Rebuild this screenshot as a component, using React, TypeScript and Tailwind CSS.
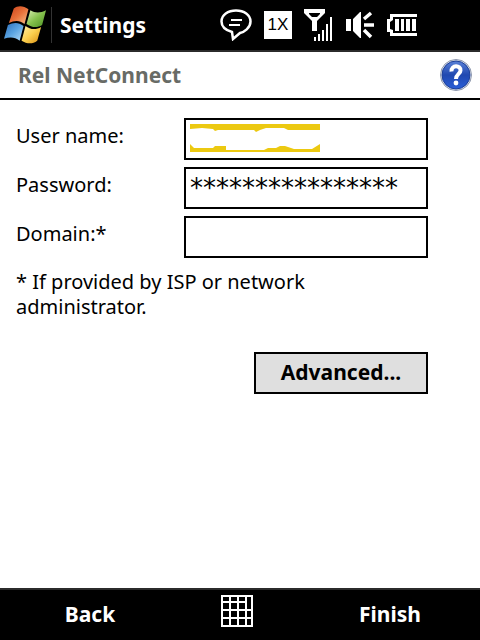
function WindowsLogo() {
  return (
    <svg width="43" height="40" viewBox="0 0 44 40" aria-hidden="true">
      <defs>
        <linearGradient id="red" x1="0" y1="0" x2="1" y2="1">
          <stop offset="0" stopColor="#c9401a" />
          <stop offset="0.5" stopColor="#e8713a" />
          <stop offset="1" stopColor="#f9c08a" />
        </linearGradient>
        <linearGradient id="green" x1="0" y1="0" x2="1" y2="1">
          <stop offset="0" stopColor="#d9efb0" />
          <stop offset="0.5" stopColor="#84c04c" />
          <stop offset="1" stopColor="#4a8f22" />
        </linearGradient>
        <linearGradient id="blue" x1="0" y1="0" x2="1" y2="1">
          <stop offset="0" stopColor="#2b6cb8" />
          <stop offset="0.5" stopColor="#5aa3e0" />
          <stop offset="1" stopColor="#b5dcf7" />
        </linearGradient>
        <linearGradient id="yellow" x1="0" y1="0" x2="1" y2="1">
          <stop offset="0" stopColor="#fff0a8" />
          <stop offset="0.5" stopColor="#fbcf4e" />
          <stop offset="1" stopColor="#d98d12" />
        </linearGradient>
      </defs>
      <path d="M10 3C14 0 20 0 25 4L21 19C16 15 11 15 5 18Z" fill="url(#red)" />
      <path d="M27 5C32 8 37 8 43 5L39 20C34 23 29 23 23 19Z" fill="url(#green)" />
      <path d="M4 20C10 17 15 17 20 21L16 36C11 32 6 32 0 34Z" fill="url(#blue)" />
      <path d="M22 21C27 25 33 25 38 22L34 36C29 40 23 39 18 36Z" fill="url(#yellow)" />
    </svg>
  )
}

function MessageIcon() {
  return (
    <svg width="32" height="32" viewBox="0 0 32 32" fill="none" stroke="white" strokeWidth="2.5">
      <path d="M12 23C5 21 1.5 17 1.5 12.5C1.5 6 8 1.5 16 1.5S30.5 6 30.5 12.5S24 23 20 24L13 30Z" />
      <path d="M11 11H22M9 16H20" strokeWidth="2" />
    </svg>
  )
}

function SignalIcon() {
  return (
    <svg width="30" height="32" viewBox="0 0 30 32" fill="white">
      <path fillRule="evenodd" d="M0 0H21V4L13 12V22H8V12L0 4ZM5 4V5L8 8H13L16 5V4Z" />
      <path d="M10 28h2v4h-2zM14 25h2v7h-2zM18 21h2v11h-2zM22 15h2v17h-2zM26 8h2v24h-2z" />
    </svg>
  )
}

function SpeakerIcon() {
  return (
    <svg width="29" height="28" viewBox="0 0 29 28" fill="white">
      <path d="M0 8h5v12H0zM7 8L14 1H15V27H14L7 20Z" />
      <path d="M18 8L25 2M18 14H28M18 19L25 26" stroke="white" strokeWidth="3.5" />
    </svg>
  )
}

function BatteryIcon() {
  return (
    <svg width="30" height="22" viewBox="0 0 30 22" fill="white">
      <path fillRule="evenodd" d="M3 0H30V3H6V6L3 8V15L6 16V19H30V22H3V18H0V5H3Z" />
      <path d="M8 5h4v12H8zM14 5h3v12h-3zM19 5h4v12h-4zM25 5h4v12h-4z" />
    </svg>
  )
}

function KeyboardIcon() {
  return (
    <svg width="32" height="32" viewBox="0 0 32 32" fill="none" stroke="white" strokeWidth="2" shapeRendering="crispEdges">
      <path d="M1 1H31V31H1ZM1 7H25M1 15H31M1 23H31M9 1V31M17 1V31M25 1V31" />
    </svg>
  )
}

function Scribble() {
  return (
    <svg className="pointer-events-none absolute left-1.5 top-1.5" width="130" height="28" viewBox="0 0 130 28" fill="#ecc911">
      <path d="M0 0H130V6H98L94 4H76L70 6L66 8L64 6H28L25 7L23 5L12 4L0 5Z" />
      <path d="M0 20L4 24H23L25 22H36V26H74L78 24H86L90 22H95L104 25H122L130 20V28H0Z" />
    </svg>
  )
}

export default function App() {
  return (
    <div className="flex min-h-screen flex-col bg-white font-['Noto_Sans',sans-serif] text-black">
      <header className="flex h-[52px] items-center border-b-2 border-[#2b2b2b] bg-black text-white">
        <div className="flex w-[220px] shrink-0 items-center pl-1">
          <WindowsLogo />
          <div className="ml-1 h-9 w-px bg-[#333333]" />
          <h1 className="ml-2 text-[21px] font-bold leading-6">Settings</h1>
        </div>
        <div className="flex items-center gap-3">
          <MessageIcon />
          <span className="flex h-7 w-7 items-center justify-center bg-white font-['Liberation_Sans',sans-serif] text-[17px] leading-7 text-black">
            1X
          </span>
          <SignalIcon />
          <SpeakerIcon />
          <BatteryIcon />
        </div>
      </header>

      <div className="flex h-12 items-center justify-between border-b-2 border-black pl-[18px] pr-2">
        <h2 className="text-[21px] font-bold leading-6 text-[#686b66]">Rel NetConnect</h2>
        <button type="button" aria-label="Help">
          <svg width="32" height="32" viewBox="0 0 32 32">
            <defs>
              <linearGradient id="help" x1="0" y1="0" x2="0" y2="1">
                <stop offset="0" stopColor="#5b82d8" />
                <stop offset="0.5" stopColor="#2048b0" />
                <stop offset="1" stopColor="#2a5fd8" />
              </linearGradient>
            </defs>
            <circle cx="16" cy="16" r="15.5" fill="#dfe4ee" stroke="#8d97ad" />
            <circle cx="16" cy="16" r="14" fill="url(#help)" stroke="#1c3f99" />
            <path d="M11.5 12.5C11 5.500 21 6 20.500 11.500C20.500 15 16 15 16 20" fill="none" stroke="white" strokeWidth="4" />
            <circle cx="16" cy="24" r="2.4" fill="white" />
          </svg>
        </button>
      </div>

      <main className="flex-1 pl-4 pr-[52px] pt-[18px]">
        <form>
          <div className="grid grid-cols-[168px_1fr] gap-y-[7px]">
            <label htmlFor="user" className="pt-1 text-[20px] leading-7">User name:</label>
            <div className="relative">
              <input
                id="user"
                type="text"
                className="block h-[42px] w-full border-2 border-black bg-white px-1 text-[20px] outline-none"
              />
              <Scribble />
            </div>
            <label htmlFor="password" className="pt-1 text-[20px] leading-7">Password:</label>
            <input
              id="password"
              type="text"
              defaultValue="****************"
              className="block h-[42px] w-full border-2 border-black bg-white px-1 font-['DejaVu_Sans',sans-serif] text-[26px] outline-none"
            />
            <label htmlFor="domain" className="pt-1 text-[20px] leading-7">Domain:*</label>
            <input
              id="domain"
              type="text"
              className="block h-[42px] w-full border-2 border-black bg-white px-1 text-[20px] outline-none"
            />
          </div>
          <p className="mt-[11px] max-w-80 text-[20px] leading-[25px]">* If provided by ISP or network administrator.</p>
          <div className="mt-[33px] flex justify-end">
            <button type="button" className="h-[42px] w-[174px] border-2 border-black bg-[#dfdfdf] text-[21px] font-bold">
              Advanced...
            </button>
          </div>
        </form>
      </main>

      <footer className="grid h-[52px] grid-cols-[3fr_2fr_3fr] items-center border-t-2 border-[#2b2b2b] bg-black text-[21px] font-bold text-white">
        <button type="button">Back</button>
        <button type="button" aria-label="Keyboard" className="flex justify-center pb-2 pr-1.5">
          <KeyboardIcon />
        </button>
        <button type="button">Finish</button>
      </footer>
    </div>
  )
}
